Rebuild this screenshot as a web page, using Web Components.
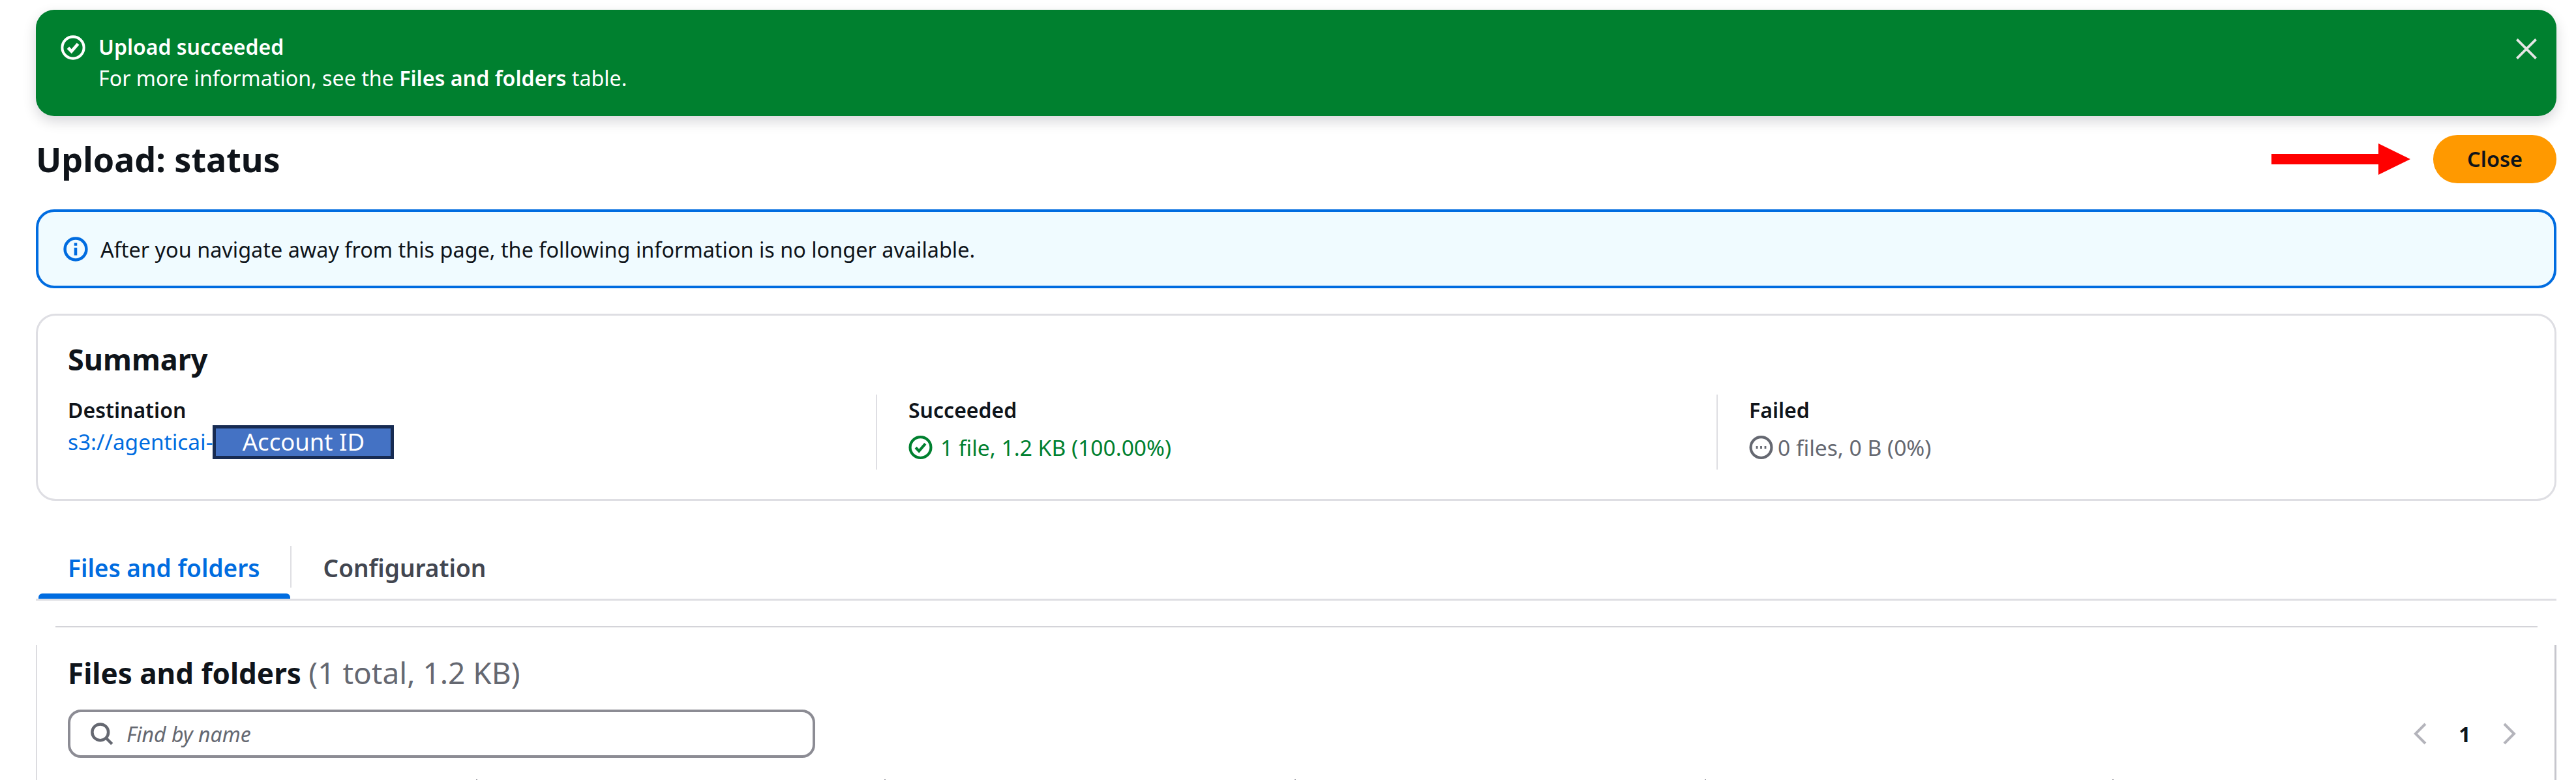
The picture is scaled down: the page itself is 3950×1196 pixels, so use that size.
<!DOCTYPE html>
<html>
<head>
<meta charset="utf-8">
<title>Upload: status</title>
<style>
html, body { margin: 0; background: #fff; }
body { font-family: "Noto Sans", "Open Sans", sans-serif; color: #0f141a; width: 3950px; height: 1196px; overflow: hidden; }
</style>
</head>
<body>

<template id="flash-tpl">
<style>
:host { display: block; margin: 15px 30px 0 55px; height: 163px; box-sizing: border-box; padding: 33px 30px 0 38px; background: #00802f; border-radius: 28px; color: #fff; box-shadow: 0 8px 20px rgba(0,7,22,.16); }
.wrap { display: flex; }
svg.ok { width: 38px; height: 38px; margin-right: 20px; flex: none; margin-top: 6px; }
.text { flex: 1; font-size: 32.2px; line-height: 48px; }
.title { font-weight: 600; font-size: 32px; }
svg.x { width: 36px; height: 38px; flex: none; margin-top: 8px; margin-right: -2px; }
</style>
<div class="wrap">
	<svg class="ok" viewBox="0 0 16 16" fill="none" stroke="#fff" stroke-width="1.7"><circle cx="8" cy="8" r="7"/><path stroke-width="2" d="M4.8 8.1l2.2 2.3L11.2 5.6"/></svg>
	<div class="text">
		<div class="title"><slot name="title"></slot></div>
		<div><slot></slot></div>
	</div>
	<svg class="x" viewBox="0 0 16 16" fill="none" stroke="#e6e6e6" stroke-width="1.7"><path d="M1.5 1.5l13 13M14.5 1.5l-13 13"/></svg>
</div>
</template>

<template id="head-tpl">
<style>
:host { display: flex; align-items: center; margin: 29px 30px 0 55px; height: 74px; }
h1 { margin: 0; font-size: 52px; font-weight: 700; line-height: 74px; flex: 1; }
svg { width: 213px; height: 48px; margin-right: 35px; flex: none; }
button { all: unset; width: 189px; height: 74px; box-sizing: border-box; text-align: center; border-radius: 37px; background: #ff9900; color: #0f141a; font: 600 32.5px/72px "Noto Sans", sans-serif; }
</style>
<h1><slot></slot></h1>
<svg viewBox="0 0 213 48"><path fill="#ff0000" d="M0 16H164V0L213 24L164 48V32H0Z"/></svg>
<button><slot name="action"></slot></button>
</template>

<template id="info-tpl">
<style>
:host { display: flex; align-items: center; margin: 40px 30px 0 55px; height: 121px; box-sizing: border-box; padding-left: 38px; border: 4px solid #006ce0; border-radius: 28px; background: #f0fbff; font-size: 32.4px; }
svg { width: 38px; height: 38px; margin-right: 19px; flex: none; }
</style>
<svg viewBox="0 0 16 16" fill="none" stroke="#006ce0" stroke-width="1.9"><circle cx="8" cy="8" r="6.9"/><path d="M8 7v5M8 4v1.8"/></svg>
<slot></slot>
</template>

<template id="summary-tpl">
<style>
:host { display: block; margin: 39px 30px 0 55px; height: 287px; box-sizing: border-box; padding: 38px 46px 0 46px; border: 3px solid #dedee3; border-radius: 30px; background: #fff; }
h2 { margin: 0; font-size: 45px; font-weight: 700; line-height: 58px; }
.cols { display: grid; grid-template-columns: 1239px 1289px 1fr; margin-top: 25px; height: 115px; }
</style>
<h2><slot name="title"></slot></h2>
<div class="cols"><slot></slot></div>
</template>

<template id="col-tpl">
<style>
:host { display: block; box-sizing: border-box; font-size: 33.4px; }
:host([divided]) { border-left: 2px solid #dedee3; padding-left: 48px; }
.label { font-size: 32px; font-weight: 600; line-height: 48px; }
.value { line-height: 48px; margin-top: 9px; }
:host([tight]) .value { margin-top: 0; }
</style>
<div class="label"><slot name="label"></slot></div>
<div class="value"><slot></slot></div>
</template>

<template id="status-tpl">
<style>
:host { display: flex; align-items: center; gap: var(--g); color: var(--c); font-size: 33.6px; }
svg { width: 37px; height: 38px; flex: none; }
</style>
<svg viewBox="0 0 16 16" fill="none" stroke="currentColor" stroke-width="1.8"><circle cx="8" cy="8" r="6.9"/><path id="g"/></svg>
<slot></slot>
</template>

<template id="acct-tpl">
<style>
:host { display: inline-block; box-sizing: border-box; width: 278px; height: 52px; border: 5px solid #172b52; background: #4472c4; color: #fff; text-align: center; font: 36.5px/40px "Noto Sans", sans-serif; vertical-align: middle; margin-top: -6px; }
</style>
<slot></slot>
</template>

<template id="tabs-tpl">
<style>
:host { display: block; margin: 69px 30px 0 55px; height: 84px; box-sizing: border-box; border-bottom: 3px solid #dedee3; }
.row { display: flex; height: 64px; }
</style>
<div class="row"><slot></slot></div>
</template>

<template id="tab-tpl">
<style>
:host { display: block; box-sizing: border-box; height: 81px; padding: 0 48px 0 49px; font-size: 37px; font-weight: 600; line-height: 68px; color: #424650; position: relative; }
:host([active]) { color: #006ce0; }
:host([active])::before { content: ""; position: absolute; left: 4px; right: 2px; bottom: 0; height: 8px; background: #006ce0; border-radius: 6px 6px 0 0; }
:host([active])::after { content: ""; position: absolute; right: 0; top: 0; height: 64px; width: 2px; background: #dedee3; }
</style>
<slot></slot>
</template>

<template id="card-tpl">
<style>
:host { display: block; margin: 39px 30px 0 55px; height: 236px; position: relative; }
.top { height: 2px; margin: 0 29px 0 30px; background: #d4d4d9; }
.body { box-sizing: border-box; height: 207px; margin-top: 27px; padding: 0 47px; border-left: 2px solid #dcdce0; border-right: 3px solid #c6c6cd; }
h2 { margin: 0; padding-top: 13px; font-size: 44px; font-weight: 700; line-height: 58px; }
h2 span { font-weight: 400; font-size: 46px; color: #656871; }
.tools { display: flex; align-items: center; justify-content: space-between; margin-top: 27px; }
.ticks { position: absolute; left: 0; right: 0; bottom: 0; height: 1px; }
.ticks i { position: absolute; bottom: 0; width: 2px; height: 1px; background: #8c8c94; }
</style>
<div class="top"></div>
<div class="body">
	<h2><slot name="title"></slot> <span><slot name="count"></slot></span></h2>
	<div class="tools"><slot></slot></div>
</div>
<div class="ticks"><i style="left:675px"></i><i style="left:1301px"></i><i style="left:1930px"></i><i style="left:2559px"></i><i style="left:3184px"></i></div>
</template>

<template id="search-tpl">
<style>
:host { display: flex; align-items: center; box-sizing: border-box; width: 1146px; height: 74px; padding-left: 30px; border: 4px solid #8c8c94; border-radius: 20px; font-size: 32px; font-style: italic; color: #656871; }
svg { width: 36px; height: 36px; margin-right: 20px; flex: none; }
</style>
<svg viewBox="0 0 16 16" fill="none" stroke="#656871" stroke-width="2"><circle cx="7" cy="7" r="5.5"/><path d="M11 11l4 4"/></svg>
<slot></slot>
</template>

<template id="pager-tpl">
<style>
:host { display: flex; align-items: center; margin-right: 12px; font-size: 32px; font-weight: 700; }
svg { width: 20px; height: 34px; flex: none; }
span { width: 117px; text-align: center; }
</style>
<svg viewBox="0 0 20 34" fill="none" stroke="#b4b4bb" stroke-width="4"><path d="M18 2L3 17l15 15"/></svg>
<span><slot></slot></span>
<svg viewBox="0 0 20 34" fill="none" stroke="#b4b4bb" stroke-width="4"><path d="M2 2l15 15L2 32"/></svg>
</template>

<s3-flash><span slot="title">Upload succeeded</span>For more information, see the <b style="font-weight:600">Files and folders</b> table.</s3-flash>
<s3-head>Upload: status<span slot="action">Close</span></s3-head>
<s3-info>After you navigate away from this page, the following information is no longer available.</s3-info>
<s3-summary>
	<span slot="title">Summary</span>
	<s3-col tight><span slot="label">Destination</span><span style="color:#006ce0">s3://agenticai-</span><s3-acct>Account ID</s3-acct></s3-col>
	<s3-col divided><span slot="label">Succeeded</span><s3-status kind="ok">1 file, 1.2 KB (100.00%)</s3-status></s3-col>
	<s3-col divided><span slot="label">Failed</span><s3-status kind="none">0 files, 0 B (0%)</s3-status></s3-col>
</s3-summary>
<s3-tabs><s3-tab active>Files and folders</s3-tab><s3-tab>Configuration</s3-tab></s3-tabs>
<s3-card>
	<span slot="title">Files and folders</span><span slot="count">(1 total, 1.2 KB)</span>
	<s3-search>Find by name</s3-search>
	<s3-pager>1</s3-pager>
</s3-card>

<script>
function plain(name, tplId) {
	customElements.define(name, class extends HTMLElement {
		constructor() {
			super();
			let root = this.attachShadow({mode: 'open'});
			root.appendChild(document.getElementById(tplId).content.cloneNode(true));
		}
	});
}
plain('s3-flash', 'flash-tpl');
plain('s3-head', 'head-tpl');
plain('s3-info', 'info-tpl');
plain('s3-summary', 'summary-tpl');
plain('s3-col', 'col-tpl');
plain('s3-acct', 'acct-tpl');
plain('s3-tabs', 'tabs-tpl');
plain('s3-tab', 'tab-tpl');
plain('s3-card', 'card-tpl');
plain('s3-search', 'search-tpl');
plain('s3-pager', 'pager-tpl');

class S3Status extends HTMLElement {
	constructor() {
		super();
		let root = this.attachShadow({mode: 'open'});
		root.appendChild(document.getElementById('status-tpl').content.cloneNode(true));
		let ok = this.getAttribute('kind') == 'ok';
		this.style.setProperty('--c', ok ? '#00802f' : '#656871');
		this.style.setProperty('--g', ok ? '12px' : '7px');
		root.getElementById('g').setAttribute('d', ok ? 'M4.8 8.1l2.2 2.3L11.2 5.6' : 'M4.6 8h1.2M7.4 8h1.2M10.2 8h1.2');
	}
}
customElements.define('s3-status', S3Status);
</script>
</body>
</html>
